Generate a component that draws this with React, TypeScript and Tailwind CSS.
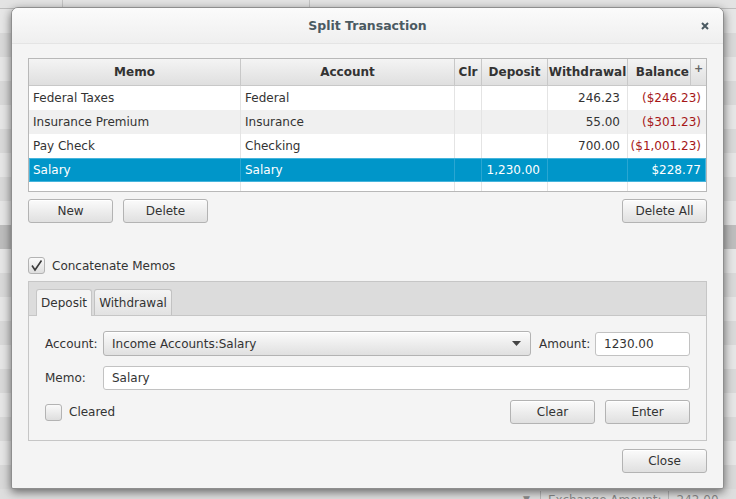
import React from "react";

const rows = [
  { memo: "Federal Taxes", account: "Federal", deposit: "", withdrawal: "246.23", balance: "($246.23)", neg: true },
  { memo: "Insurance Premium", account: "Insurance", deposit: "", withdrawal: "55.00", balance: "($301.23)", neg: true },
  { memo: "Pay Check", account: "Checking", deposit: "", withdrawal: "700.00", balance: "($1,001.23)", neg: true },
  { memo: "Salary", account: "Salary", deposit: "1,230.00", withdrawal: "", balance: "$228.77", neg: false },
];

const cols = "grid-cols-[212px_214px_27px_66px_80px_78px]";

function Button({ label, className = "" }: { label: string; className?: string }) {
  return (
    <button
      className={
        "h-[24px] rounded-[3px] border border-[#b3b3b3] bg-gradient-to-b from-[#fbfbfb] to-[#e0e0e0] text-[12px] text-[#333] shadow-[inset_0_1px_0_#fff] " +
        className
      }
    >
      {label}
    </button>
  );
}

function CheckBox({ checked }: { checked?: boolean }) {
  return (
    <div className="w-[17px] h-[17px] rounded-[3px] border border-[#b3b3b3] bg-gradient-to-b from-[#fafafa] to-[#dedede] flex items-center justify-center">
      {checked && (
        <svg width="13" height="13" viewBox="0 0 13 13">
          <path d="M2 6.5 L5 11 L11.5 1.5" fill="none" stroke="#3a3a3a" strokeWidth="1.6" />
        </svg>
      )}
    </div>
  );
}

function Background() {
  const bands = Array.from({ length: 20 });
  return (
    <div className="flex flex-col w-full h-full">
      <div className="h-[9px] border-b border-[#bdbdbd] bg-[#e3e3e3] flex">
        <div className="w-[63px] border-r border-[#c4c4c4]" />
        <div className="w-[247px] border-r border-[#c4c4c4]" />
      </div>
      {bands.map((_, i) => (
        <div
          key={i}
          className={
            "h-[24px] shrink-0 " +
            (i === 9 ? "bg-[#bdbdbd]" : i % 2 === 0 ? "bg-[#e6e6e6]" : "bg-[#d9d9d9]")
          }
        />
      ))}
      {/* bit of the main window's footer peeking out below the dialog */}
      <div className="absolute left-0 top-[491px] w-full h-[17px] flex items-center pl-[523px] text-[12px] text-[#8a8a8a]">
        <span className="text-[9px] mr-[10px]">▼</span>
        <span className="border-l border-[#b8b8b8] pl-[7px] pr-[6px]">Exchange Amount:</span>
        <span className="border-l border-[#b8b8b8] pl-[8px]">242.00</span>
      </div>
    </div>
  );
}

export default function App() {
  return (
    <div className="relative w-[736px] h-[499px] overflow-hidden bg-[#dedede] font-['DejaVu_Sans',sans-serif]">
      <Background />

      {/* dialog window */}
      <div className="absolute left-[11px] top-[7px] w-[713px] h-[482px] rounded-t-[7px] rounded-b-[2px] border border-[#8e8e8e] bg-[#f4f4f4] shadow-[0_3px_10px_rgba(0,0,0,0.55)] flex flex-col overflow-hidden">
        {/* title bar */}
        <div className="relative h-[36px] shrink-0 flex items-center justify-center pt-[1px] bg-gradient-to-b from-[#fbfbfb] to-[#efefef] border-b border-[#e4e4e4]">
          <span className="text-[12.5px] font-bold text-[#4b5a62]">Split Transaction</span>
          <svg className="absolute right-[14px] top-[14px]" width="8" height="8" viewBox="0 0 8 8">
            <path d="M1 1 L7 7 M7 1 L1 7" stroke="#4b5a62" strokeWidth="2" />
          </svg>
        </div>

        <div className="flex flex-col px-[16px] pt-[14px]">
          {/* split table */}
          <div className="h-[134px] border border-[#b8b8b8] bg-white flex flex-col text-[12px] text-[#333]">
            <div className={"grid h-[27px] shrink-0 " + cols}>
              {["Memo", "Account", "Clr", "Deposit", "Withdrawal"].map((h) => (
                <div
                  key={h}
                  className="flex items-center justify-center font-bold border-r border-b border-[#c8c8c8] bg-gradient-to-b from-[#f4f4f4] to-[#dfdfdf]"
                >
                  {h}
                </div>
              ))}
              <div className="flex border-b border-[#c8c8c8] bg-gradient-to-b from-[#f4f4f4] to-[#dfdfdf]">
                <div className="flex-1 flex items-center justify-end font-bold overflow-hidden whitespace-nowrap border-r border-[#c8c8c8] pr-[1px]">
                  Balance
                </div>
                <div className="w-[15px] flex items-start justify-center pt-[2px] text-[11px] font-bold text-[#666]">+</div>
              </div>
            </div>
            {rows.map((r, i) => {
              const sel = i === 3;
              const bg = sel ? "bg-[#0096c9] text-white outline outline-1 -outline-offset-1 outline-[#45b4dc]" : i % 2 === 1 ? "bg-[#f0f0f0]" : "bg-white";
              const line = sel ? "border-[#2aa6d2]" : "border-[#e4e4e4]";
              return (
                <div key={i} className={"grid h-[24px] shrink-0 " + cols + " " + bg}>
                  <div className={"flex items-center pl-[4px] border-r " + line}>{r.memo}</div>
                  <div className={"flex items-center pl-[4px] border-r " + line}>{r.account}</div>
                  <div className={"border-r " + line} />
                  <div className={"flex items-center justify-end pr-[7px] border-r " + line}>{r.deposit}</div>
                  <div className={"flex items-center justify-end pr-[7px] border-r " + line}>{r.withdrawal}</div>
                  <div className={"flex items-center justify-end pr-[5px] " + (r.neg ? "text-[#a61717]" : "")}>{r.balance}</div>
                </div>
              );
            })}
            <div className={"grid flex-1 " + cols}>
              <div className="border-r border-[#e4e4e4]" />
              <div className="border-r border-[#e4e4e4]" />
              <div className="border-r border-[#e4e4e4]" />
              <div className="border-r border-[#e4e4e4]" />
              <div className="border-r border-[#e4e4e4]" />
              <div />
            </div>
          </div>

          {/* table buttons */}
          <div className="flex mt-[7px]">
            <Button label="New" className="w-[85px]" />
            <Button label="Delete" className="w-[85px] ml-[10px]" />
            <Button label="Delete All" className="w-[85px] ml-auto" />
          </div>

          {/* concatenate */}
          <div className="flex items-center gap-[7px] mt-[34px] h-[17px] text-[12px] text-[#333]">
            <CheckBox checked />
            <span>Concatenate Memos</span>
          </div>

          {/* tab pane */}
          <div className="mt-[7px] h-[160px] border border-[#c6c6c6] flex flex-col">
            <div className="h-[34px] shrink-0 bg-[#dcdcdc] border-b border-[#c6c6c6] flex items-end pl-[7px] gap-[2px] text-[12px] text-[#333]">
              <div className="h-[27px] w-[56px] -mb-px rounded-t-[3px] border border-b-0 border-[#c6c6c6] bg-[#f4f4f4] flex items-center justify-center">
                Deposit
              </div>
              <div className="h-[26px] w-[78px] rounded-t-[3px] border border-b-0 border-[#c2c2c2] bg-gradient-to-b from-[#f4f4f4] to-[#e2e2e2] flex items-center justify-center">
                Withdrawal
              </div>
            </div>

            <div className="flex flex-col px-[16px] pt-[15px] gap-[10px] text-[12px] text-[#333]">
              <div className="flex items-center h-[25px]">
                <span className="w-[58px]">Account:</span>
                <div className="flex-1 h-[25px] rounded-[3px] border border-[#b3b3b3] bg-gradient-to-b from-[#fbfbfb] to-[#e0e0e0] shadow-[inset_0_1px_0_#fff] flex items-center pl-[8px] pr-[9px]">
                  <span className="flex-1">Income Accounts:Salary</span>
                  <svg width="9" height="5" viewBox="0 0 9 5">
                    <path d="M0 0 H9 L4.5 5 Z" fill="#444" />
                  </svg>
                </div>
                <span className="ml-[8px] w-[56px]">Amount:</span>
                <div className="w-[95px] h-[24px] rounded-[3px] border border-[#c2c2c2] bg-white flex items-center pl-[8px]">1230.00</div>
              </div>

              <div className="flex items-center h-[24px]">
                <span className="w-[58px]">Memo:</span>
                <div className="flex-1 h-[24px] rounded-[3px] border border-[#c2c2c2] bg-white flex items-center pl-[8px]">Salary</div>
              </div>

              <div className="flex items-center h-[24px]">
                <CheckBox />
                <span className="ml-[7px]">Cleared</span>
                <Button label="Clear" className="w-[85px] ml-auto" />
                <Button label="Enter" className="w-[85px] ml-[10px]" />
              </div>
            </div>
          </div>

          <div className="flex justify-end mt-[8px]">
            <Button label="Close" className="w-[85px]" />
          </div>
        </div>
      </div>
    </div>
  );
}
